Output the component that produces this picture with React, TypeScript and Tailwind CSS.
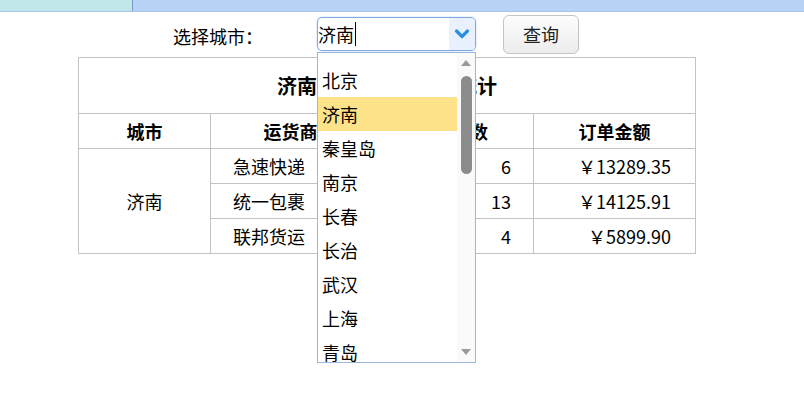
import React from 'react';

const cities = ['北京', '济南', '秦皇岛', '南京', '长春', '长治', '武汉', '上海', '青岛'];

const rows = [
  { shipper: '急速快递', count: 6, amount: '￥13289.35' },
  { shipper: '统一包裹', count: 13, amount: '￥14125.91' },
  { shipper: '联邦货运', count: 4, amount: '￥5899.90' },
];

export default function App() {
  const font = { fontFamily: '"Microsoft YaHei", "Noto Sans CJK SC", sans-serif' };

  return (
    <div className="w-[804px] h-[399px] bg-white text-black overflow-hidden relative" style={font}>
      {/* top strip */}
      <div className="flex h-[12px] border-b border-[#a8c4ea]">
        <div className="w-[133px] bg-[#c2e7ea] border-r border-[#7d9ac0]" />
        <div className="flex-1 bg-[#b7d4f6]" />
      </div>

      {/* toolbar */}
      <div className="flex items-center h-[42px] mt-[1px]">
        <span className="ml-[173px] w-[144px] text-[18px] leading-[24px] mt-[3px]">选择城市：</span>
        <div className="relative">
          <div className="flex w-[159px] h-[34px] border border-[#7ea8e4] rounded-[5px] shadow-[0_0_2px_#b9d2f3] bg-white overflow-hidden">
            <div className="flex-1 flex items-center text-[18px] leading-[24px]">
              <span>济南</span>
              <span className="w-px h-[24px] bg-black ml-px" />
            </div>
            <div className="w-[26px] bg-[#e8f1fd] flex items-center justify-center">
              <svg width="16" height="12" viewBox="0 0 16 12">
                <path d="M2.5 3 L8 8.5 L13.5 3" fill="none" stroke="#2a8ee2" strokeWidth="3.2" strokeLinecap="round" strokeLinejoin="round" />
              </svg>
            </div>
          </div>

          {/* dropdown list */}
          <div className="absolute left-0 top-[35px] w-[159px] h-[311px] bg-white border border-[#9db6de] z-10 flex">
            <div className="flex-1 pt-[10px]">
              {cities.map((c) => (
                <div
                  key={c}
                  className={`h-[34px] flex items-center pl-[4px] text-[18px] leading-[24px] ${c === '济南' ? 'bg-[#fee38b]' : ''}`}
                >
                  {c}
                </div>
              ))}
            </div>
            <div className="w-[18px] bg-[#fafafa] flex flex-col items-center">
              <svg width="12" height="8" viewBox="0 0 12 8" className="mt-[6px]">
                <path d="M1 7 L6 1 L11 7 Z" fill="#9a9a9a" />
              </svg>
              <div className="w-[11px] h-[98px] rounded-full bg-[#8c8c8c] mt-[9px]" />
              <div className="flex-1" />
              <svg width="12" height="8" viewBox="0 0 12 8" className="mb-[6px]">
                <path d="M1 1 L6 7 L11 1 Z" fill="#9a9a9a" />
              </svg>
            </div>
          </div>
        </div>
        <button className="ml-[27px] w-[76px] h-[39px] border border-[#c4c4c4] rounded-[6px] bg-gradient-to-b from-[#fdfdfd] to-[#ececec] text-[18px] leading-[24px] text-[#222]">
          查询
        </button>
      </div>

      {/* table */}
      <table className="ml-[78px] mt-[2px] w-[618px] border-collapse table-fixed">
        <colgroup>
          <col className="w-[132px]" />
          <col className="w-[160px]" />
          <col className="w-[163px]" />
          <col className="w-[162px]" />
        </colgroup>
        <tbody>
          <tr className="h-[56px]">
            <td colSpan={4} className="border border-[#c3c3c3] text-center font-bold text-[20px] leading-[26px]">
              济南各运货商订单数统计
            </td>
          </tr>
          <tr className="h-[35px]">
            <th className="border border-[#c3c3c3] text-[18px] leading-[24px] font-bold">城市</th>
            <th className="border border-[#c3c3c3] text-[18px] leading-[24px] font-bold">运货商</th>
            <th className="border border-[#c3c3c3] text-[18px] leading-[24px] font-bold">订单总数</th>
            <th className="border border-[#c3c3c3] text-[18px] leading-[24px] font-bold">订单金额</th>
          </tr>
          {rows.map((r, i) => (
            <tr key={r.shipper} className="h-[35px]">
              {i === 0 && (
                <td rowSpan={3} className="border border-[#c3c3c3] text-center text-[18px] leading-[24px]">
                  济南
                </td>
              )}
              <td className="border border-[#c3c3c3] pl-[22px] text-[18px] leading-[24px]">{r.shipper}</td>
              <td className="border border-[#c3c3c3] pr-[22px] text-right text-[18px] leading-[24px]">{r.count}</td>
              <td className="border border-[#c3c3c3] pr-[24px] text-right text-[18px] leading-[24px]">{r.amount}</td>
            </tr>
          ))}
        </tbody>
      </table>
    </div>
  );
}
